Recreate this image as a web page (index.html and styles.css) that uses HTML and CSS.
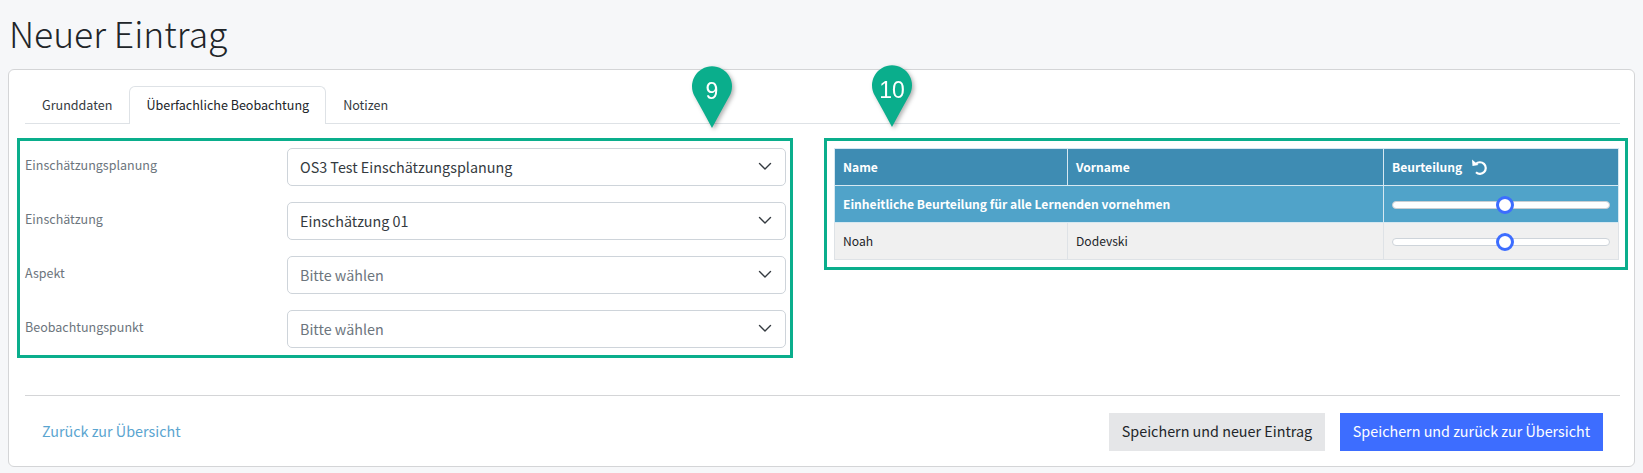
FILE: index.html
```html
<!DOCTYPE html>
<html lang="de">
<head>
<meta charset="utf-8">
<title>Neuer Eintrag</title>
<link rel="stylesheet" href="styles.css">
</head>
<body>
<h1 class="title">Neuer Eintrag</h1>
<main class="card">
  <nav class="tabs">
    <a class="tab">Grunddaten</a>
    <a class="tab active">Überfachliche Beobachtung</a>
    <a class="tab">Notizen</a>
  </nav>
  <div class="columns">
    <section class="box box-form">
      <div class="field">
        <label class="label">Einschätzungsplanung</label>
        <div class="select"><span>OS3 Test Einschätzungsplanung</span><svg class="chev" viewBox="0 0 16 16"><path d="M2.5 5.5 8 11l5.5-5.5"/></svg></div>
      </div>
      <div class="field">
        <label class="label">Einschätzung</label>
        <div class="select"><span>Einschätzung 01</span><svg class="chev" viewBox="0 0 16 16"><path d="M2.5 5.5 8 11l5.5-5.5"/></svg></div>
      </div>
      <div class="field">
        <label class="label">Aspekt</label>
        <div class="select placeholder"><span>Bitte wählen</span><svg class="chev" viewBox="0 0 16 16"><path d="M2.5 5.5 8 11l5.5-5.5"/></svg></div>
      </div>
      <div class="field">
        <label class="label">Beobachtungspunkt</label>
        <div class="select placeholder"><span>Bitte wählen</span><svg class="chev" viewBox="0 0 16 16"><path d="M2.5 5.5 8 11l5.5-5.5"/></svg></div>
      </div>
    </section>
    <section class="box box-table">
      <table class="grid">
        <colgroup><col class="c1"><col class="c2"><col class="c3"></colgroup>
        <thead>
          <tr class="head">
            <th>Name</th>
            <th>Vorname</th>
            <th><span class="th-flex">Beurteilung <svg class="undo" viewBox="0 0 16 16"><path d="M4.8 5A5.8 5.8 0 1 1 5 13.3"/><path class="fill" d="M1 .5 1.5 7 7.5 6z"/></svg></span></th>
          </tr>
          <tr class="sub">
            <th colspan="2">Einheitliche Beurteilung für alle Lernenden vornehmen</th>
            <th><div class="slider filled"><i class="thumb"></i></div></th>
          </tr>
        </thead>
        <tbody>
          <tr>
            <td>Noah</td>
            <td>Dodevski</td>
            <td><div class="slider"><i class="thumb"></i></div></td>
          </tr>
        </tbody>
      </table>
    </section>
  </div>
  <footer class="footer">
    <a class="back">Zurück zur Übersicht</a>
    <div class="actions">
      <button class="btn btn-secondary">Speichern und neuer Eintrag</button>
      <button class="btn btn-primary">Speichern und zurück zur Übersicht</button>
    </div>
  </footer>
  <div class="pin pin-9"><svg viewBox="0 0 40 62"><path d="M20 62Q12 47 2.5 30A20 20 0 1 1 37.5 30Q28 47 20 62z"/></svg><span>9</span></div>
  <div class="pin pin-10"><svg viewBox="0 0 40 62"><path d="M20 62Q12 47 2.5 30A20 20 0 1 1 37.5 30Q28 47 20 62z"/></svg><span>10</span></div>
</main>
</body>
</html>
```
FILE: styles.css
```css
* { box-sizing: border-box; }
html, body { margin: 0; }
body {
  background: #f6f7f9;
  font-family: "Noto Sans CJK SC", "Noto Sans", sans-serif;
  color: #212529;
  font-size: 14.35px;
  height: 473px;
  overflow: hidden;
}
.title {
  margin: 0;
  height: 69px;
  padding: 9px 0 0 9px;
  font-size: 35.5px;
  line-height: 48px;
  font-weight: 300;
  color: #212529;
}
.card {
  position: relative;
  margin: 0 8px;
  height: 398px;
  background: #fff;
  border: 1px solid #d4d5d7;
  border-radius: 6px;
  padding-top: 16px;
}
.tabs {
  display: flex;
  margin: 0 14px 0 16px;
  height: 38px;
  border-bottom: 1px solid #dee2e6;
  font-size: 12.55px;
}
.tab {
  height: 38px;
  line-height: 36px;
  padding: 0 16px;
  border: 1px solid transparent;
  border-bottom: 0;
  color: #343a40;
  border-radius: 6px 6px 0 0;
}
.tab.active {
  background: #fff;
  border-color: #dee2e6;
  color: #212529;
}
.columns {
  display: flex;
  align-items: flex-start;
  gap: 31px;
  margin: 14px 6px 0 8px;
}
.box { border: 3px solid #0aae8c; }
.box-form {
  width: 777px;
  height: 220px;
  padding: 7px 4px 7px 5px;
  display: flex;
  flex-direction: column;
  gap: 16px;
}
.field { display: flex; height: 38px; }
.label {
  width: 262px;
  font-size: 12.5px;
  line-height: 34px;
  color: #6c757d;
}
.select {
  flex: 1;
  display: flex;
  align-items: center;
  justify-content: space-between;
  padding: 0 12px 0 12px;
  border: 1px solid #ced4da;
  border-radius: 5px;
  line-height: 36px;
  color: #343a40;
}
.select.placeholder { color: #6c757d; }
.chev {
  width: 16px;
  height: 16px;
  margin-top: -3px;
  fill: none;
  stroke: #343a40;
  stroke-width: 1.4;
  stroke-linecap: round;
  stroke-linejoin: round;
}
.box-table {
  width: 804px;
  height: 132px;
  padding: 7px 6px 7px 7px;
}
.grid {
  width: 785px;
  table-layout: fixed;
  border-collapse: collapse;
  font-size: 12.1px;
  border: 1px solid #dee2e6;
}
.c1 { width: 233px; }
.c2 { width: 316px; }
.grid th, .grid td {
  height: 37px;
  padding: 0 8px;
  text-align: left;
  line-height: 18px;
  border: 1px solid #dee2e6;
}
.grid th { color: #fff; font-weight: 700; border-color: #d6e8f1; }
.head th { background: #3e8cb3; }
.sub th { background: #50a3c9; }
.grid td { background: #f0f0f0; color: #212529; }
.th-flex { display: inline-flex; align-items: center; gap: 9px; }
.undo {
  width: 16px;
  height: 16px;
  fill: none;
  stroke: #fff;
  stroke-width: 2.2;
}
.undo .fill { fill: #fff; stroke: none; }
.slider {
  position: relative;
  height: 8px;
  width: 218px;
  margin-top: 1px;
  background: #fff;
  border: 1px solid #ced4da;
  border-radius: 4px;
}
.slider.filled { border-color: #c9ced3; }
.thumb {
  position: absolute;
  left: 103px;
  top: -6px;
  width: 18px;
  height: 18px;
  border-radius: 50%;
  background: #fff;
  border: 3px solid #3d6dff;
}
.footer {
  position: absolute;
  left: 16px;
  right: 14px;
  bottom: 15px;
  height: 56px;
  border-top: 1px solid #d4d5d7;
  display: flex;
  align-items: flex-end;
  justify-content: space-between;
  padding: 0 17px;
}
.back {
  color: #5aa5d0;
  line-height: 38px;
  margin-bottom: 1px;
}
.actions { display: flex; gap: 15px; }
.btn {
  height: 38px;
  border: 0;
  padding: 0 0 2px;
  font: inherit;
  line-height: 36px;
  white-space: nowrap;
}
.btn-secondary { width: 216px; background: #e5e6e8; color: #212529; }
.btn-primary { width: 263px; background: #3d6dff; color: #fff; }
.pin {
  position: absolute;
  width: 40px;
  height: 62px;
  filter: drop-shadow(2px 2px 2px rgba(0, 0, 0, .3));
  color: #fff;
  font-family: "Liberation Sans", Arial, sans-serif;
  font-size: 23px;
  text-align: center;
}
.pin svg { position: absolute; inset: 0; fill: #0aae8c; }
.pin span { position: relative; display: block; line-height: 51px; }
.pin-9 { left: 683px; top: -4px; }
.pin-10 { left: 863px; top: -5px; }
```
